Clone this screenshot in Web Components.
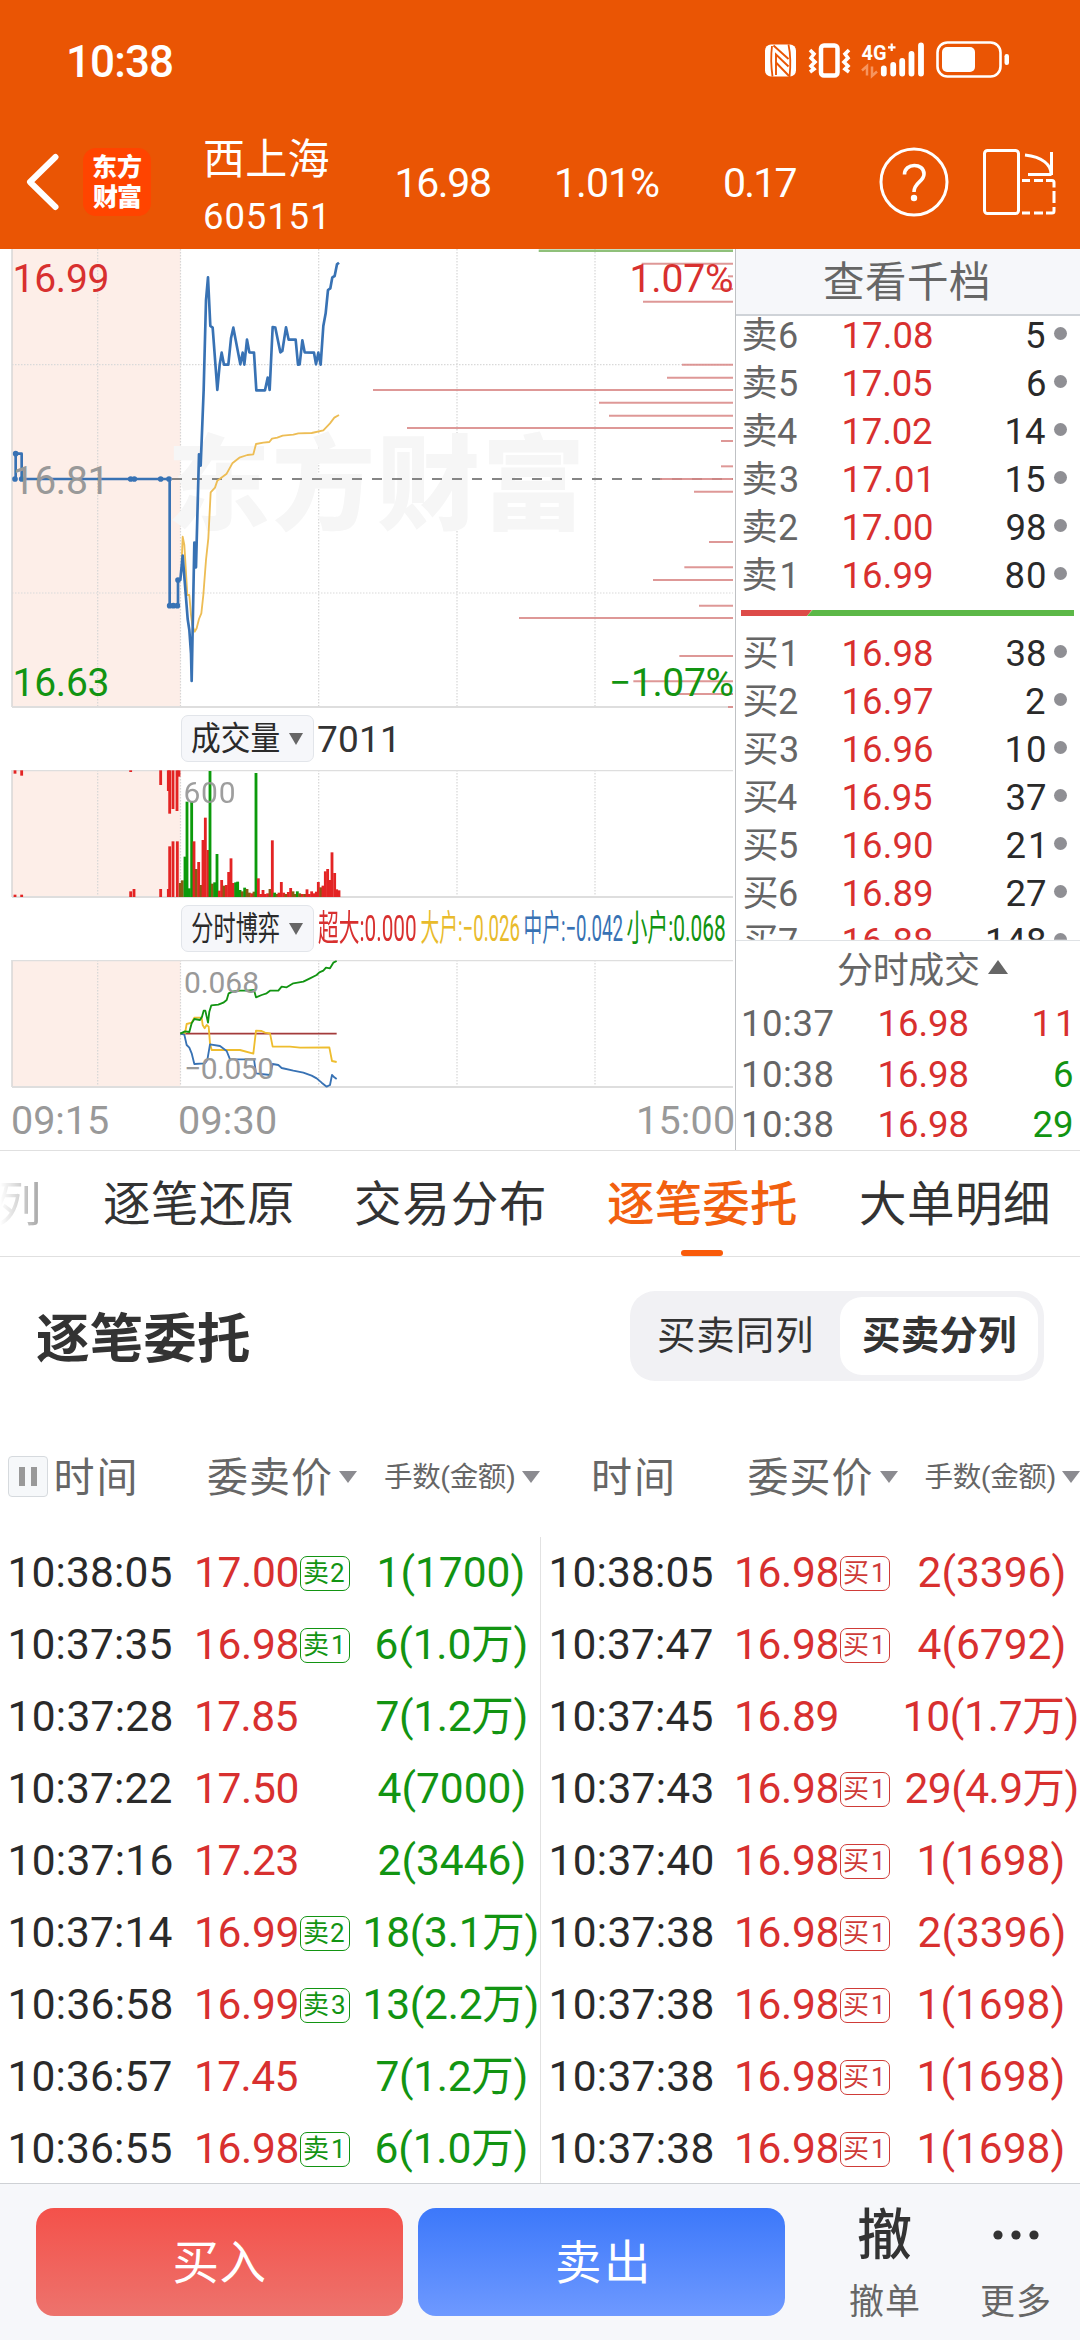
<!DOCTYPE html>
<html lang="zh-CN">
<head>
<meta charset="utf-8">
<title>西上海 605151</title>
<style>
html,body{margin:0;padding:0;background:#fff}
body{width:1080px;height:2340px;overflow:hidden;font-family:Roboto,"Noto Sans CJK SC",sans-serif;color:#2b2b2b}
</style>
</head>
<body>
<stock-page></stock-page>
<script>
const FONT = 'Roboto,"Noto Sans CJK SC",sans-serif';
const RED = '#d8302f', GREEN = '#129412', GREY = '#666', DARK = '#2a2a2a';
const ctx = document.createElement('canvas').getContext('2d');

function define(name, render) {
  customElements.define(name, class extends HTMLElement {
    connectedCallback() {
      if (this.shadowRoot) return;
      this.attachShadow({ mode: 'open' }).innerHTML = render(this);
    }
  });
}

/* A label whose box is its ink: w = width, s = size, c = colour, b = weight, squeeze = condensed glyphs. */
customElements.define('ink-text', class extends HTMLElement {
  connectedCallback() {
    if (this.shadowRoot) return;
    const t = this.textContent, s = +this.getAttribute('s'), b = this.getAttribute('b') || 400;
    ctx.font = `${b} ${s}px ${FONT}`;
    const m = ctx.measureText(t);
    const left = m.actualBoundingBoxLeft, ink = left + m.actualBoundingBoxRight;
    const w = +this.getAttribute('w') || ink;
    const n = [...t].length;
    const inner = this.hasAttribute('squeeze')
      ? `transform-origin:0 0;transform:scaleX(${w / ink}) translateX(${left}px)`
      : `margin-left:${left}px;letter-spacing:${n > 1 ? (w - ink) / (n - 1) : 0}px`;
    this.attachShadow({ mode: 'open' }).innerHTML = `
<style>:host{display:block;flex:none;width:${w}px;height:${s}px;line-height:${s}px;white-space:nowrap;
font:${b} ${s}px/${s}px ${FONT};color:${this.getAttribute('c') || 'inherit'}}
span{display:inline-block;${inner}}</style><span><slot></slot></span>`;
  }
});

const T = (text, s, w, c, extra = '') =>
  `<ink-text s="${s}" w="${w || ''}" c="${c || 'inherit'}" ${extra}>${text}</ink-text>`;
const ml = (x, y = 0) => `style="margin-left:${x}px;${y ? `margin-top:${y}px` : ''}"`;

/* ---------- header ---------- */
define('status-bar', () => `
<style>:host{display:flex;height:120px;align-items:center;padding-left:69px;color:#fff}
svg{margin-left:auto;display:block}</style>
${T('10:38', 44, 103, '#fff', 'b="500" style="margin-top:3px"')}
<svg width="320" height="120" viewBox="760 0 320 120">
 <rect x="765" y="44.500" width="31" height="32" rx="6" fill="#fff"/>
 <path d="M772 46C771 54 771 66 772.500 76.500M788.500 44.500C790.500 54 790.500 68 789.500 77" fill="none" stroke="#ea5504" stroke-width="1.800"/>
 <path d="M773.500 45.500L788.500 59M776 75V54.500L788.500 66.500M776 62.500L789 76" fill="none" stroke="#ea5504" stroke-width="1.900"/>
 <rect x="821" y="45.500" width="16.500" height="30" rx="3" fill="none" stroke="#fff" stroke-width="4.500"/>
 <path d="M810 50l4 4-3 4 4 4-4 4 3 3-4 3M849 50l-4 4 3 4-4 4 4 4-3 3 4 3" fill="none" stroke="#fff" stroke-width="3.600"/>
 <text x="861.500" y="59.500" font-size="20.500" font-weight="700" font-family="Roboto" fill="#fff" textLength="25" lengthAdjust="spacingAndGlyphs">4G</text>
 <path d="M888 47.300h7.500M891.700 43.500v7.600" stroke="#fff" stroke-width="2.200"/>
 <path d="M862 70.500l5-4.500v9.500M877 71.500l-5 4.500v-9.500" fill="none" stroke="#f6955f" stroke-width="2.500"/>
 <g stroke="#fff" stroke-width="5.800" stroke-linecap="round"><path d="M883.800 68.500v5M893.200 65v8.500M902.200 61v12.500M911.500 54v19.500M921 45.500v28"/></g>
 <rect x="937.500" y="42.500" width="63" height="34" rx="10" fill="none" stroke="#fff" stroke-width="2.600"/>
 <rect x="942" y="47" width="33" height="25" rx="5" fill="#fff"/>
 <rect x="1004.500" y="54" width="4.500" height="11" rx="2.200" fill="#fff"/>
</svg>`);

define('app-logo', () => `
<style>:host{display:flex;flex-direction:column;align-items:center;justify-content:center;gap:5px;width:68px;height:68px;border-radius:13px;background:#ff4400}</style>
${T('东方', 25, 48, '#fff', 'b="900"')}${T('财富', 25, 48, '#fff', 'b="900"')}`);

define('title-bar', () => `
<style>:host{display:flex;height:129px;align-items:center;box-sizing:border-box;padding:0 0 5px 26px;color:#fff}
.n{display:flex;flex-direction:column;gap:18px;margin-left:54px;padding-top:10px}
svg{display:block;flex:none}</style>
<svg width="34" height="60"><path d="M29.500 5L4 30L29.500 55" fill="none" stroke="#fff" stroke-width="6" stroke-linecap="round" stroke-linejoin="round"/></svg>
<app-logo ${ml(23)}></app-logo>
<div class="n">${T('西上海', 42, 123.5, '#fff')}${T('605151', 36.5, 118, '#fff')}</div>
${T('16.98', 41, 92.5, '#fff', ml(69, 2))}${T('1.01%', 41, 102, '#fff', ml(67, 2))}${T('0.17', 41, 71.5, '#fff', ml(66, 2))}
<svg ${ml(82)} width="70" height="72"><circle cx="35" cy="36" r="33" fill="none" stroke="#fff" stroke-width="3"/>
<path d="M25.500 28.500C25.500 16.500 45 16.500 45 28C45 36 35 36 35 46" fill="none" stroke="#fff" stroke-width="3.600"/><circle cx="35" cy="52" r="3.200" fill="#fff"/></svg>
<svg ${ml(32)} width="76" height="72" viewBox="980 145 76 72"><g fill="none" stroke="#fff" stroke-width="3">
<rect x="983.500" y="149.500" width="34" height="63" rx="3"/><path d="M1024 154c18 2 26 10 26 19M1050.500 151v23M1027 173.500h23.500"/>
<path d="M1021 179.500h8M1033 179.500h9M1045 179.500h6q2 0 2 2v5M1053 190v12M1053 206v4q0 2-2 2h-6M1042 212h-9M1029 212h-8"/></g></svg>`);

/* ---------- charts ---------- */
const label = (x, y, w, s, c, t) =>
  `<text x="${x}" y="${y}" font-size="${s}" fill="${c}" textLength="${w}">${t}</text>`;
function frame(y0, y1) {
  let s = `<rect x="12" y="${y0}" width="168.500" height="${y1 - y0}" fill="#fdeee8"/>`;
  for (const x of [97.7, 180.5, 318.7, 457, 595]) s += `<path d="M${x} ${y0}V${y1}" stroke="#d6d6d6" stroke-width="1.200" stroke-dasharray="1.500 1.500"/>`;
  return s + `<path d="M12 ${y0}V${y1}" stroke="#d2d2d2" stroke-width="1.300"/><path d="M12 ${y1}H733" stroke="#dedede" stroke-width="1.800"/>`;
}
const SVGCSS = `<style>:host{display:block}svg{display:block}text{font-family:${FONT}}</style>`;

define('price-chart', () => {
  const levels = [[56,845],[94,1104],[132,1058],[170,849],[359,966],[398,921],[435,39],[473,717],[512,747],[549,141],[588,1083],[664,1083],[702,900],[740,1002],[891,1047],[967,973],[1005,879],[1082,1017],[1119,477],[1233,958],[1309,820],[1347,948],[1386,1104]];
  const dots = [[45,702],[65,702],[47,626],[392,702],[403,702],[482,702],[507,702],[509,1082],[520,1082],[532,1082],[534,1005]];
  return `${SVGCSS}<svg width="734" height="460" viewBox="0 249 734 460">
${frame(249, 707)}
<text x="167" y="522" font-size="103" font-weight="900" fill="#f6f6f6" textLength="418">东方财富</text>
<path d="M12 364.700H733M12 593H733" stroke="#d9d9d9" stroke-width="1.200" stroke-dasharray="1.500 1.500"/>
<path d="M172 479H733" stroke="#858585" stroke-width="2" stroke-dasharray="10 10"/>
<g stroke="#d88685" stroke-opacity=".85" stroke-width="2">${levels.map(([y, x]) => `<path d="M${360 + x / 3} ${245 + y / 3}H733"/>`).join('')}</g>
<path d="M538.700 250.800H733" stroke="#8fc07a" stroke-width="2.400"/>
<g transform="translate(0 245) scale(.33333)" fill="none" stroke-linejoin="round">
<polyline stroke="#edbd55" stroke-width="5.500" points="545,950 548,875 553,900 562,1050 568,1050 573,1110 577,1140 584,1160 590,1150 597,1122 604,1105 610,1050 618,945 625,880 632,742 645,728 652,707 680,686 697,655 718,638 742,630 760,628 768,597 790,593 808,591 816,581 832,578 848,572 880,569 895,565 935,564 970,556 990,535 1003,518 1017,510"/>
<polyline stroke="#3872b4" stroke-width="8" points="47,702 47,626 65,626 65,702 509,702 509,1082 534,1082 534,1005 541,1005 548,932 563,1122 568,1155 573,1225 575,1308 583,893 588,967 597,628 602,662 611,435 618,165 624,97 631,243 638,248 652,435 659,359 665,323 672,359 685,359 693,280 700,248 721,358 728,323 733,359 741,284 748,322 762,323 769,436 795,436 803,398 809,435 818,246 826,248 841,322 847,318 858,247 866,284 887,284 894,359 899,358 907,286 914,322 942,323 948,358 955,323 962,359 970,243 977,205 984,135 991,130 997,97 1004,93 1011,58 1017,53"/>
<g fill="#3872b4">${dots.map(([x, y]) => `<circle cx="${x}" cy="${y}" r="8.500"/>`).join('')}</g></g>
${label(12.500, 291.7, 97, 39, RED, '16.99')}${label(12.500, 493.7, 97, 39, '#999', '16.81')}${label(12.500, 696, 97, 39, GREEN, '16.63')}
${label(629.500, 291.7, 104, 39, RED, '1.07%')}${label(609, 696, 125, 39, GREEN, '−1.07%')}
</svg>`;
});

define('volume-chart', () => {
  const R = '#e32424', G = '#0b9a0b', O = '#8a5a12';
  const up = [[45,221],[65,227],[392,216],[482,255],[505,273],[509,341],[519,327],[531,333],[537,230]];
  const low = `45,584r 65,584r 392,574r 402,567r 482,567r 505,567r 509,439r 519,424r 532,424r 541,549o 547,541o 555,470g 561,305g 568,565g 575,305g 582,424r 589,507o 596,486r 603,555o 609,420r 616,353r 624,450r 630,213g 637,551o 644,547g 651,462g 658,572r 665,540r 672,557o 679,555r 686,516r 693,475r 700,549r 707,547g 713,545g 720,570g 727,574o 734,563g 741,567o 748,578o 755,580r 762,575o 768,219g 775,535r 782,582r 789,570r 796,582r 803,580r 810,567o 817,421r 824,578g 831,582o 837,578r 844,546r 851,578r 858,582o 865,576r 872,564r 879,574o 886,582o 892,574g 899,580o 907,582r 914,582o 921,568r 928,582r 935,574r 942,580r 949,575r 955,546r 962,562o 969,557r 976,514r 983,507r 990,540r 996,457r 1004,519r 1010,568r 1017,571r`;
  return `${SVGCSS}<svg width="734" height="129" viewBox="0 770 734 129">${frame(770, 897)}
<path d="M12 770.600H733" stroke="#dedede" stroke-width="1.200"/>
<g transform="translate(0 700) scale(.33333)" stroke-width="8.500">
${up.map(([x, y]) => `<path stroke="${R}" d="M${x} 211V${y}"/>`).join('')}
${low.split(' ').map(v => { const m = v.match(/(\d+),(\d+)(.)/); return `<path stroke="${{ r: R, g: G, o: O }[m[3]]}" d="M${m[1]} 591V${m[2]}"/>`; }).join('')}
</g><g opacity=".9">${label(183.500, 802.700, 52, 30, '#949494', '600')}</g></svg>`;
});

define('flow-chart', () => `${SVGCSS}<svg width="734" height="129" viewBox="0 960 734 129">${frame(960, 1087)}
<path d="M12 960.600H733" stroke="#dedede" stroke-width="1.200"/>
<g transform="translate(0 700) scale(.33333)" fill="none" stroke-width="5.500" stroke-linejoin="round">
<path d="M541 1001H1010" stroke="#a33b3b"/>
<polyline stroke="#eebd2e" points="541,1001 555,1000 560,972 575,968 583,953 605,953 608,975 614,985 620,975 626,980 630,1030 635,1050 720,1050 760,1061 768,992 785,993 795,998 810,1000 818,1040 870,1040 900,1043 988,1042 996,1083 1010,1086"/>
<polyline stroke="#3872b4" points="541,1001 553,1004 560,1035 568,1043 575,1060 583,1092 615,1090 622,1080 630,1033 660,1038 680,1053 690,1078 762,1078 768,1120 810,1125 818,1092 835,1095 845,1104 880,1112 910,1118 935,1127 950,1135 965,1148 980,1160 990,1155 996,1125 1003,1132 1010,1137"/>
<polyline stroke="#129412" points="541,1001 555,994 568,996 575,970 583,957 600,960 606,950 611,932 616,932 620,950 624,968 628,935 634,916 655,914 670,908 680,900 686,880 700,874 720,872 740,872 762,870 768,892 785,885 800,880 810,872 835,872 845,860 860,862 880,850 910,845 930,835 950,825 958,817 970,812 978,803 990,805 1000,788 1010,783"/></g>
${label(184, 992.700, 75, 30, '#999', '0.068')}${label(184, 1078.700, 90, 30, '#999', '−0.050')}</svg>`);

define('drop-pill', el => `
<style>:host{display:flex;align-items:center;box-sizing:border-box;flex:none;width:133px;height:47px;margin:-2px 0 0 181px;padding-left:10px;border:1.500px solid #e2e5ea;border-radius:7px;background:#f6f7fa}
i{width:0;height:0;margin-left:10px;border:7.500px solid transparent;border-top:12px solid #666;border-bottom:0}</style>
${T(el.getAttribute('t'), 33.5, 87, DARK, 'squeeze')}<i></i>`);

define('chart-panel', () => `
<style>:host{display:block;width:736px;border-right:1.500px solid #bfc1c4;height:902px;box-sizing:border-box;flex:none}
.bar{display:flex;align-items:center;height:61px}.t{display:flex;height:64px;align-items:center}</style>
<price-chart></price-chart>
<div class="bar"><drop-pill t="成交量"></drop-pill>${T('7011', 37, 76, '#333', ml(4, -1))}</div>
<volume-chart></volume-chart>
<div class="bar"><drop-pill t="分时博弈"></drop-pill>${T('超大:0.000', 36, 98, RED, 'squeeze ' + ml(4, -2))}${T('大户:−0.026', 36, 98.5, '#e9bb2c', 'squeeze ' + ml(5, -2))}${T('中户:−0.042', 36, 97.5, '#3872b4', 'squeeze ' + ml(5, -2))}${T('小户:0.068', 36, 98, GREEN, 'squeeze ' + ml(5, -2))}</div>
<flow-chart></flow-chart>
<div class="t">${T('09:15', 39.5, 95, '#999', ml(13))}${T('09:30', 39.5, 95, '#999', ml(72))}${T('15:00', 39.5, 94, '#999', ml(364))}</div>`);

/* ---------- order book ---------- */
define('book-row', el => {
  const [a, p, q] = el.getAttribute('v').split(' '), one = s => s.endsWith('1');
  return `<style>:host{display:flex;height:48px;align-items:center}
.l{width:102px;display:flex;padding-left:7.500px;box-sizing:border-box}.l,.p{margin-top:1px}
.q{flex:1;display:flex;justify-content:flex-end;color:${DARK};margin-top:1px}i{width:13px;height:13px;border-radius:50%;background:#8f8f94;margin:-4px 13px 0 9px}</style>
<div class="l">${T(a, 36, one(a) ? 49 : 53.5, GREY)}</div>
<div class="l" style="padding:0;margin-left:6.500px;width:88px">${T(p, 36.5, one(p) ? 83.500 : 87.5, RED)}</div>
<div class="q">${T(q, 36.5, q.length == 3 ? 57 : q.length == 1 ? 0 : one(q) ? 34.5 : q[0] == '1' ? 37.5 : 38.5, DARK, one(q) ? 'style="margin-right:4px"' : '')}</div><i></i>`;
});

define('trade-row', el => {
  const [a, p, q, c] = el.getAttribute('v').split(' ');
  return `<style>:host{display:flex;height:51px;align-items:center}.q{flex:1;display:flex;justify-content:flex-end;padding-right:${q == '11' ? 12 : 8}px}</style>
${T(a, 36.5, 88.5, GREY, ml(8))}${T(p, 36.5, 87, RED, ml(48))}<div class="q">${T(q, 36.5, q == '11' ? 33.5 : q == '29' ? 38.5 : 0, c == 'r' ? RED : GREEN)}</div>`;
});

define('order-book', () => `
<style>:host{display:flex;flex-direction:column;width:344px;height:902px;flex:none}
.h{display:flex;height:65px;align-items:center;justify-content:center;background:#f6f7fa;border-bottom:2px solid #cfd3d8;padding:3px 4px 0 0;box-sizing:border-box;height:67px}
.b{height:624px;clip-path:inset(-3px 0 0 0);display:flex;flex-direction:column}
.a{margin-top:-4px}
.r{height:30px;display:flex;align-items:center;padding:0 6px 4px 5px;box-sizing:border-box;flex:none}
.r svg{display:block}
.s{display:flex;height:59px;padding-top:2px;box-sizing:border-box;align-items:center;border-top:1px solid #dfe2e5;flex:none}
.s i{width:0;height:0;border:10.500px solid transparent;border-bottom:14px solid #666;border-top:0;margin:-7px 0 0 9px}</style>
<div class="h">${T('查看千档', 41.5, 164, GREY)}</div>
<div class="b"><div class="a">${['卖6 17.08 5','卖5 17.05 6','卖4 17.02 14','卖3 17.01 15','卖2 17.00 98','卖1 16.99 80'].map(v => `<book-row v="${v}"></book-row>`).join('')}</div>
<div class="r"><svg width="333" height="6"><path d="M0 0H71L66 6H0z" fill="#dd4b48"/><path d="M71.500 0H333V6H66z" fill="#5cb847"/></svg></div>
<div>${['买1 16.98 38','买2 16.97 2','买3 16.96 10','买4 16.95 37','买5 16.90 21','买6 16.89 27','买7 16.88 148'].map(v => `<book-row v="${v}"></book-row>`).join('')}</div></div>
<div class="s">${T('分时成交', 36, 141, GREY, ml(102))}<i></i></div>
<trade-row v="10:37 16.98 11 r"></trade-row><trade-row v="10:38 16.98 6 g"></trade-row><trade-row v="10:38 16.98 29 g"></trade-row>`);

/* ---------- tabs, title ---------- */
define('tab-bar', () => `
<style>:host{display:flex;align-items:center;border-top:1.500px solid #e0e0e0;border-bottom:1.500px solid #e0e0e0;box-sizing:border-box;height:107px}
.f{width:38px;display:flex;justify-content:flex-end;-webkit-mask:linear-gradient(90deg,transparent,#000)}
.on{display:flex;flex-direction:column;align-items:center;align-self:flex-start;margin-left:64px;padding-top:31px}
.on i{width:42px;height:6px;border-radius:3px;background:#f95b0a;margin-top:20px}</style>
<div class="f" style="margin-top:5px">${T('列', 47.5, 0, '#aaa')}</div>
${T('逐笔还原', 47.5, 188, '#333', ml(66, 5))}${T('交易分布', 47.5, 188, '#333', ml(64, 5))}
<div class="on">${T('逐笔委托', 47.5, 188, '#f2600f', 'b="500"')}<i></i></div>
${T('大单明细', 47.5, 187, '#333', ml(65, 5))}`);

define('section-head', () => `
<style>:host{display:flex;height:158px;align-items:center;padding-left:37px;color:#333}
.seg{display:flex;align-items:center;box-sizing:border-box;width:414px;height:90px;margin-left:381px;border-radius:25px;background:#f1f1f4}
.on{display:flex;align-items:center;justify-content:center;width:198px;height:78px;border-radius:22px;background:#fff;margin-left:29px}</style>
${T('逐笔委托', 53.5, 212, '#333', 'b="700" style="margin-top:7px"')}
<div class="seg">${T('买卖同列', 38.5, 152, '#333', ml(29, 1))}<div class="on">${T('买卖分列', 38.5, 152, '#333', 'b="700" style="margin-top:1px"')}</div></div>`);

/* ---------- table ---------- */
define('sort-arrow', () => `<style>:host{display:block;flex:none;width:0;height:0;border:9px solid transparent;border-top:12px solid #8b8b90;border-bottom:0}</style>`);

define('table-head', () => `
<style>:host{display:flex;height:122px;align-items:center}
.c{width:540px;display:flex;align-items:center;flex:none}
.p{display:flex;align-items:center;justify-content:center;gap:6px;box-sizing:border-box;width:40px;height:41px;margin-left:8px;border:1.500px solid #d6dade;border-radius:4px;background:#f6f8fa}
.p i{width:6px;height:19px;background:#999}</style>
<div class="c"><div class="p"><i></i><i></i></div>${T('时间', 41, 78, GREY, ml(9, 5))}${T('委卖价', 41, 123, GREY, ml(73.5, 5))}<sort-arrow ${ml(8, 1)}></sort-arrow>${T('手数(金额)', 28.5, 129, GREY, ml(28, 5))}<sort-arrow ${ml(8, 1)}></sort-arrow></div>
<div class="c">${T('时间', 41, 78, GREY, ml(54, 5))}${T('委买价', 41, 123, GREY, ml(76.5, 5))}<sort-arrow ${ml(8, 1)}></sort-arrow>${T('手数(金额)', 28.5, 129, GREY, ml(28, 5))}<sort-arrow ${ml(7, 1)}></sort-arrow></div>`);

define('level-badge', el => {
  const t = el.getAttribute('t'), c = t[0] == '卖' ? GREEN : '#cf3b38';
  return `<style>:host{display:flex;align-items:center;box-sizing:border-box;width:50px;height:35px;border:1.300px solid ${c};border-radius:7px;flex:none;margin-left:2px;padding-left:3.500px}</style>${T(t, 26, t[1] == '1' ? 37 : 40, c)}`;
});

define('order-row', el => {
  const [t, p, b, q] = el.getAttribute('v').split(' '), c = el.getAttribute('side') == 'sell' ? GREEN : RED;
  const w = q.length == 7 && q.includes('万') ? 149 : q.length > 7 ? 171 : q[0] == '1' ? 143 : 145;
  return `<style>:host{display:flex;height:72px;align-items:center}.b{width:52px;flex:none}.q{width:203px;display:flex;justify-content:center;flex:none}</style>
${T(t, 42.5, 161, DARK, ml(c == GREEN ? 10.5 : 10.5))}${T(p, 42.5, 100.5, RED, ml(c == GREEN ? 25.5 : 24.5))}<div class="b">${b == '-' ? '' : `<level-badge t="${b}"></level-badge>`}</div><div class="q">${T(q, 42.5, w, c)}</div>`;
});

define('order-table', () => {
  const sell = ['10:38:05 17.00 卖2 1(1700)','10:37:35 16.98 卖1 6(1.0万)','10:37:28 17.85 - 7(1.2万)','10:37:22 17.50 - 4(7000)','10:37:16 17.23 - 2(3446)','10:37:14 16.99 卖2 18(3.1万)','10:36:58 16.99 卖3 13(2.2万)','10:36:57 17.45 - 7(1.2万)','10:36:55 16.98 卖1 6(1.0万)'];
  const buy = ['10:38:05 16.98 买1 2(3396)','10:37:47 16.98 买1 4(6792)','10:37:45 16.89 - 10(1.7万)','10:37:43 16.98 买1 29(4.9万)','10:37:40 16.98 买1 1(1698)','10:37:38 16.98 买1 2(3396)','10:37:38 16.98 买1 1(1698)','10:37:38 16.98 买1 1(1698)','10:37:38 16.98 买1 1(1698)'];
  const col = (rows, side) => `<div>${rows.map(v => `<order-row side="${side}" v="${v}"></order-row>`).join('')}</div>`;
  return `<style>:host{display:flex;height:646px;overflow:hidden}div{width:540px;box-sizing:border-box;flex:none}div+div{border-left:1px solid #e2e2e2}</style>${col(sell, 'sell')}${col(buy, 'buy')}`;
});

/* ---------- footer ---------- */
define('trade-bar', () => `
<style>:host{display:flex;height:157px;box-sizing:border-box;border-top:1.500px solid #ced1d5;background:#f6f7fa;align-items:flex-start;padding:24px 0 0 36px}
.b{display:flex;align-items:center;justify-content:center;width:367px;height:108px;border-radius:18px;flex:none}
.c{display:flex;flex-direction:column;align-items:center;gap:22px;flex:none}
svg{display:block}</style>
<div class="b" style="background:linear-gradient(#f4514a,#ed736d)">${T('买入', 46.5, 90, '#fff', 'style="margin-top:2px"')}</div>
<div class="b" style="background:linear-gradient(#3c78fa,#6e99ff);margin-left:15px">${T('卖出', 46.5, 89, '#fff', 'style="margin-top:2px"')}</div>
<div class="c" style="margin-left:65px">${T('撤', 55, 0, '#333', 'b="500"')}${T('撤单', 35, 69, GREY)}</div>
<div class="c" style="margin-left:62px"><svg width="50" height="55"><g fill="#333"><circle cx="7" cy="27" r="4.600"/><circle cx="25" cy="27" r="4.600"/><circle cx="43" cy="27" r="4.600"/></g></svg>${T('更多', 35, 69, GREY)}</div>`);

define('stock-page', () => `
<style>:host{display:flex;flex-direction:column;width:1080px;height:2340px;background:#fff}
header{background:#ea5504;height:249px}.m{display:flex;height:901px;flex:none}
:host>*{flex:none}</style>
<header><status-bar></status-bar><title-bar></title-bar></header>
<div class="m"><chart-panel></chart-panel><order-book></order-book></div>
<tab-bar></tab-bar><section-head></section-head><table-head></table-head><order-table></order-table><trade-bar></trade-bar>`);
</script>
</body>
</html>
